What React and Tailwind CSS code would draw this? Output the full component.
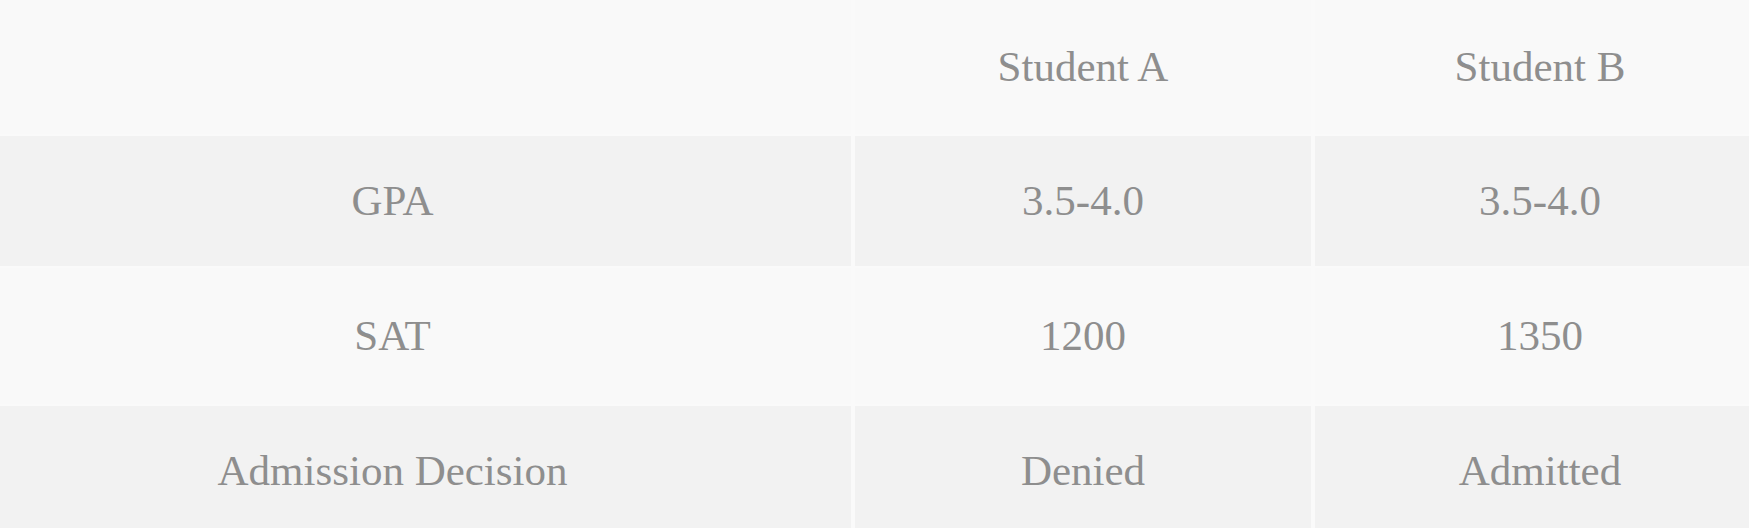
const rows = [
  { label: "GPA", a: "3.5-4.0", b: "3.5-4.0", bg: "bg-[#f2f2f2]", h: "h-[130px]" },
  { label: "SAT", a: "1200", b: "1350", bg: "bg-[#f9f9f9]", h: "h-[136px]" },
  { label: "Admission Decision", a: "Denied", b: "Admitted", bg: "bg-[#f2f2f2]", h: "h-[130px]" },
];

export default function App() {
  return (
    <div
      className="w-[1749px] h-[528px] overflow-hidden bg-[#fafafa] text-[43px] text-[#8e8e8e]"
      style={{ fontFamily: '"Liberation Serif", "Times New Roman", serif' }}
    >
      <div className="grid grid-cols-[851px_456px_1fr] gap-x-[4px] gap-y-[2px]">
        {/* header */}
        <div className="h-[134px] bg-[#f9f9f9]" />
        <div className="h-[134px] bg-[#f9f9f9] flex items-center justify-center">Student A</div>
        <div className="h-[134px] bg-[#f9f9f9] flex items-center justify-center pl-[16px]">Student B</div>

        {rows.map((r) => (
          <>
            <div key={r.label + "l"} className={`${r.h} ${r.bg} flex items-center justify-center pr-[66px]`}>
              {r.label}
            </div>
            <div key={r.label + "a"} className={`${r.h} ${r.bg} flex items-center justify-center`}>
              {r.a}
            </div>
            <div key={r.label + "b"} className={`${r.h} ${r.bg} flex items-center justify-center pl-[16px]`}>
              {r.b}
            </div>
          </>
        ))}
      </div>
    </div>
  );
}
